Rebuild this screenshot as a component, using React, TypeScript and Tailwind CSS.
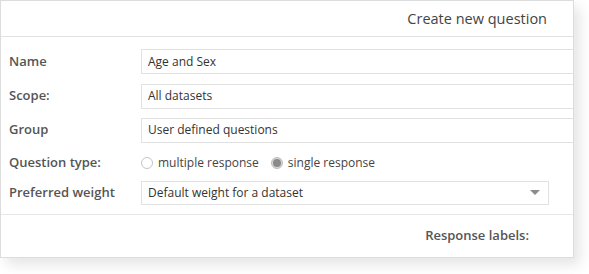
import React from 'react';

const Row: React.FC<{ label: string; h: string; children: React.ReactNode }> = ({ label, h, children }) => (
  <div className={`flex items-center ${h}`}>
    <div className="w-[140px] shrink-0 pl-[8px] text-[13px] font-semibold text-[#555]">{label}</div>
    {children}
  </div>
);

const TextBox: React.FC<{ value: string }> = ({ value }) => (
  <div className="flex h-[25px] flex-1 items-center border border-[#e2e2e2] bg-white px-[6px] text-[12px] text-[#333] -mr-px">
    {value}
  </div>
);

const Radio: React.FC<{ checked?: boolean; label: string }> = ({ checked, label }) => (
  <label className="flex items-center gap-[5px] text-[12px] text-[#444]">
    <span
      className={`flex h-[12px] w-[12px] items-center justify-center rounded-full border ${
        checked ? 'border-[#bdbdbd] bg-[#d6d6d6]' : 'border-[#c4c4c4] bg-white'
      }`}
    >
      {checked && <span className="h-[8px] w-[8px] rounded-full bg-[#8a8a8a]" />}
    </span>
    <span>{label}</span>
  </label>
);

export default function App() {
  return (
    <div className="h-[274px] w-[589px] bg-white" style={{ fontFamily: '"Open Sans", "Liberation Sans", sans-serif' }}>
      <div className="flex h-[258px] w-[574px] flex-col overflow-hidden border border-[#dcdcdc] bg-white shadow-[6px_7px_12px_rgba(0,0,0,0.10)]">
        {/* Header */}
        <div className="flex h-[36px] shrink-0 items-center justify-end border-b border-[#e2e2e2] pr-[26px] text-[14.5px] text-[#444]">
          Create new question
        </div>

        {/* Form */}
        <div className="flex flex-col border-b border-[#e6e6e6] pt-[7px] pb-[6px]">
          <Row label="Name" h="h-[35px]">
            <TextBox value="Age and Sex" />
          </Row>
          <Row label="Scope:" h="h-[34px]">
            <TextBox value="All datasets" />
          </Row>
          <Row label="Group" h="h-[34px]">
            <TextBox value="User defined questions" />
          </Row>
          <Row label="Question type:" h="h-[31px]">
            <div className="flex items-center gap-[12px]">
              <Radio label="multiple response" />
              <Radio checked label="single response" />
            </div>
          </Row>
          <Row label="Preferred weight" h="h-[30px]">
            <div className="flex h-[24px] w-[408px] items-center justify-between border border-[#e2e2e2] bg-white pl-[6px] pr-[8px] text-[12px] text-[#333]">
              <span>Default weight for a dataset</span>
              <svg width="10" height="6" viewBox="0 0 10 6">
                <path d="M0 0 L10 0 L5 5 Z" fill="#8c8c8c" />
              </svg>
            </div>
          </Row>
        </div>

        {/* Footer */}
        <div className="flex flex-1 items-center justify-end pr-[44px] text-[13px] font-semibold text-[#555]">
          Response labels:
        </div>
      </div>
    </div>
  );
}
